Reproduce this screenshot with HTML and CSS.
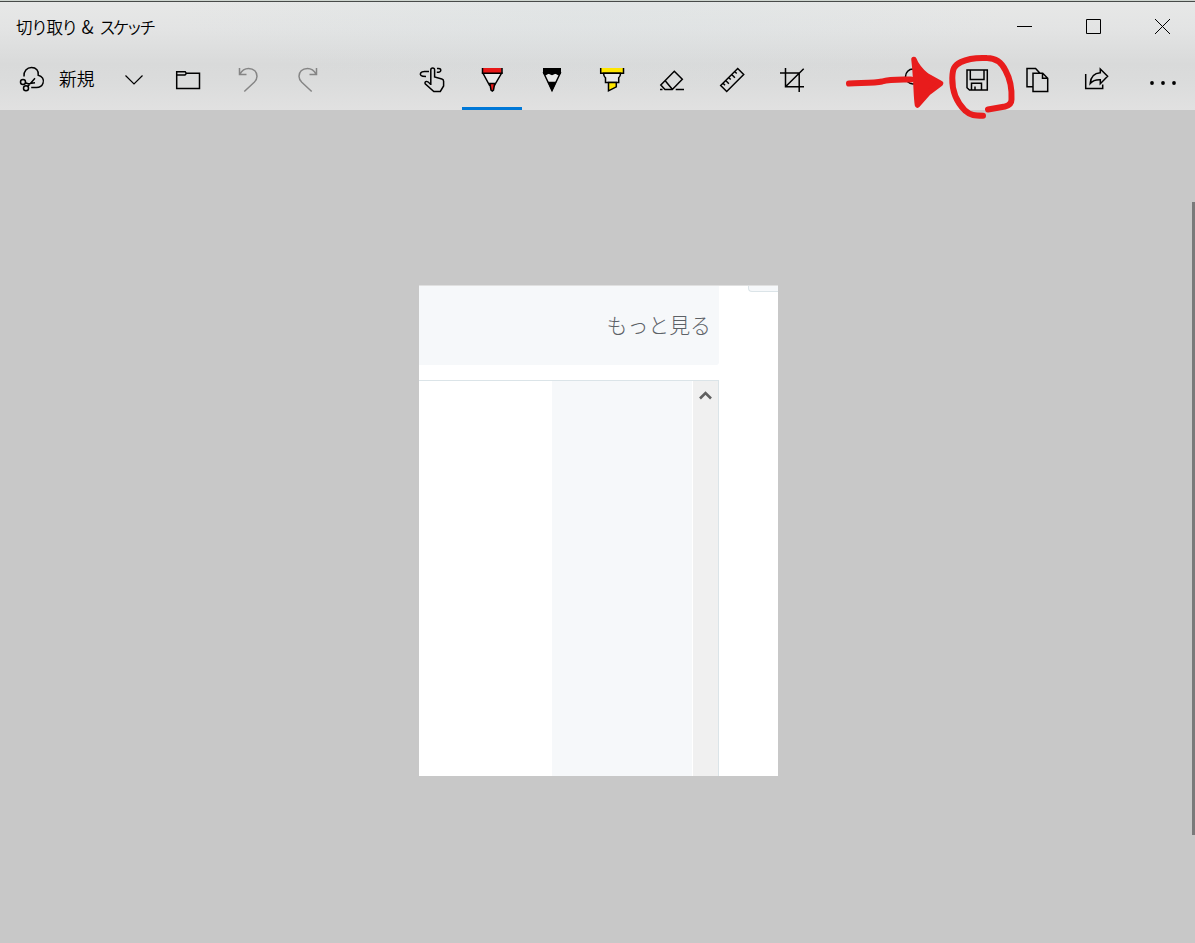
FILE: index.html
```html
<!DOCTYPE html>
<html lang="ja">
<head>
    <meta charset="UTF-8">
    <meta name="viewport" content="width=device-width, initial-scale=1.0">
    <title>切り取り &amp; スケッチ</title>
    <link rel="stylesheet" href="styles.css">
</head>
<body>
    <header class="header">
        <div class="titlebar">
            <h1><span class="kanji">切り取り</span> <span class="amp">&amp;</span> <span class="kana">スケッチ</span></h1>
            <div class="window-buttons">
                <button aria-label="最小化"><svg width="15" height="15"><path d="M0 7.5h15"/></svg></button>
                <button aria-label="最大化"><svg width="15" height="15"><path d="M.5.5h14v14H.5z"/></svg></button>
                <button aria-label="閉じる"><svg width="15" height="15"><path d="M0 0l15 15M15 0L0 15"/></svg></button>
            </div>
        </div>

        <div class="toolbar">
            <div class="group left">
                <button class="new">
                    <svg class="icon" viewBox="0 0 28 28"><path d="M6 10.5C5.5 5 9 1.6 13.5 1.6c4.700 0 7.500 3.200 6.700 7.600 4 1 6.200 4.300 4.800 8-1.100 3-3.500 4.300-6.500 4.300h-5.300M9.500 20.700l7.500-8.400M7.300 16.800l2.700 1 7-1"/><circle cx="5" cy="16" r="2.500"/><circle cx="8" cy="22.300" r="2.500"/></svg>
                    <span>新規</span>
                </button>
                <button class="arrow" aria-label="遅延"><svg class="icon thin" viewBox="0 0 28 28"><path d="M5.500 9.500l8.500 8.500 8.500-8.500"/></svg></button>
                <button class="tool" aria-label="開く"><svg class="icon" viewBox="0 0 28 28"><path d="M2.700 5.700h8.500l1 1.500H25.500v15.300H2.700zM2.700 9h8.300l1.500-1.800"/></svg></button>
                <button class="tool disabled" aria-label="元に戻す"><svg class="icon" viewBox="0 0 28 28"><path d="M5.500 2v6.500h7M5.800 8.300C8 4.300 11 2.500 14.500 2.500c5.500 0 8.500 3.500 8.500 7.800 0 2.700-1 4.200-2.800 6L10.300 25.500"/></svg></button>
                <button class="tool disabled" aria-label="やり直し"><svg class="icon" viewBox="0 0 28 28"><path d="M22.500 2v6.500h-7M22.200 8.300C20 4.300 17 2.500 13.500 2.500 8 2.500 5 6 5 10.300c0 2.700 1 4.200 2.800 6L17.700 25.500"/></svg></button>
            </div>

            <div class="group pens">
                <button class="tool" aria-label="タッチによる手書き"><svg class="icon" viewBox="0 0 28 28"><path d="M12.800 19V4q0-1.900 1.900-1.900T16.600 4v7l7.200 2q1.800.5 1.800 2.300V20l-3.300 5.500h-6.500L7.200 17.800q-.7-2 1-2.400 1.600-.3 4.600 3.100M11 5.500H6.500C2.500 5.700 1.500 8 3 9.500c1 1 2.500 1 5 1M19 2.600q3.800-.6 3.800 1.600T18.800 6.300"/></svg></button>
                <button class="tool active" aria-label="ボールペン"><svg class="icon" viewBox="0 0 28 28"><path class="paper" d="M5 7.300h18.500l-7 12h-5z"/><path class="red" d="M4.700 2h19v5.300h-19z" stroke="none"/><path d="M4.500 2v5.300h19.500V2"/><path class="red" d="M11.800 17.500h4.900l-1.200 6.500-1.200 1-1.300-1z"/></svg></button>
                <button class="tool" aria-label="鉛筆"><svg class="icon" viewBox="0 0 28 28"><path class="paper" d="M5.700 7L14 24.500 22.300 7z"/><path class="black" stroke="none" d="M5 2h18v5.500l-2.500 2-3-1.800-3.500 1.600-3.500-1.600-3 1.800-2.500-2zM9.500 15.700h9L14 25.600z"/></svg></button>
                <button class="tool" aria-label="蛍光ペン"><svg class="icon" viewBox="0 0 28 28"><path class="yellow" stroke="none" d="M2.500 2h23v5.300h-23z"/><path d="M2.700 2v5.300h22.800V2"/><path class="paper" d="M5.500 7.300q.2 3 2 4.500v4.700H20.700v-4.700q1.700-1.500 1.900-4.500z"/><path class="yellow" d="M10.500 16.500h7.800v4.300l-7.800 4z"/></svg></button>
                <button class="tool" aria-label="消しゴム"><svg class="icon" viewBox="0 0 28 28"><path d="M16.300 5.200l8 8.100L14.300 23.500H7l-4.200-4.600zM7 14.600l7.300 8.700M2 23.500h2.500M17.700 23.500H26"/></svg></button>
                <button class="tool" aria-label="ルーラー"><svg class="icon" viewBox="0 0 28 28"><path d="M19.700 2.500l6 6L8.700 25.500l-6-6zM16.700 5.500l2 2M13.700 8.500l3.200 3.200M10.700 11.500l2 2M7.700 14.500l3.200 3.200M5 17.200l2 2"/></svg></button>
                <button class="tool" aria-label="切り取り"><svg class="icon" viewBox="0 0 28 28"><path d="M7.500 2v18.700H26M2 7h19.200v19M7.500 20.700l18.200-18"/></svg></button>
            </div>

            <div class="group right">
                <button class="tool" aria-label="ズーム"><svg class="icon" viewBox="0 0 28 28"><circle cx="10" cy="10.500" r="7.500"/><path d="M15.500 16l9 9"/></svg></button>
                <button class="tool" aria-label="保存"><svg class="icon" viewBox="0 0 28 28"><path d="M4 4h20.300v20H6.500L4 21.700zM7.300 4v9.500H21V4M8.500 24v-6.800h10V24M12 24v-3.500"/></svg></button>
                <button class="tool" aria-label="コピー"><svg class="icon" viewBox="0 0 28 28"><path d="M9.700 20.700H4V2.500h8.600l4.400 4.700M10 7.200h9.700l5 5v13.300H10zM19.500 7.200v5h5"/></svg></button>
                <button class="tool" aria-label="共有"><svg class="icon" viewBox="0 0 28 28"><path d="M2.700 8v14.500h17v-4M17.300 3l7.300 7.300-7.300 7.400v-3.900C13 13.600 10 14.400 7.200 17.500 7.700 11.300 11.500 7.200 17.300 6.800z"/></svg></button>
                <button class="more" aria-label="もっと見る"><svg class="icon" viewBox="0 0 28 28"><g class="black" stroke="none"><circle cx="3" cy="17" r="1.900"/><circle cx="14" cy="17" r="1.900"/><circle cx="25" cy="17" r="1.900"/></g></svg></button>
            </div>
        </div>
    </header>

    <main class="canvas">
        <div class="snip">
            <div class="column">
                <div class="panel-head">もっと見る</div>
                <div class="panel-body">
                    <div class="blank"></div>
                    <div class="shade"></div>
                    <div class="scroll"><svg width="13" height="9" viewBox="0 0 13 9"><path d="M1 7.500l5.500-5.500L12 7.500"/></svg></div>
                </div>
            </div>
            <div class="side"><div class="corner"></div></div>
        </div>
        <div class="scrollbar"></div>
    </main>

    <!-- 赤ペンの書き込み -->
    <svg class="ink" width="190" height="80" viewBox="0 0 190 80">
        <path class="line" d="M14 38.500C30 37.800 40 38 47 36.500 55 34 62 34.500 76 34.500"/>
        <path class="head" d="M79 14.500c1.500 4.500 6.500 12 13 16.500l13.500 7.500-12 9L82.500 60c-1.500-8-1-25-3.500-45.500z"/>
        <path class="ring" d="M153 64.500l17-3c4-1 6.500-3 6.500-7 .5-10-1-20-6-29C166 16 160 13 152 13c-10-.5-19 .5-26 4-7 3.500-8.500 7-8.700 16-.3 13 4.200 24 12.700 32.500 5.500 5 10 5.200 18 5.200"/>
    </svg>
</body>
</html>
```

FILE: styles.css
```css
* {
    box-sizing: border-box;
}

body {
    margin: 0;
    height: 100vh;
    display: flex;
    flex-direction: column;
    position: relative;
    overflow: hidden;
    background-color: #c8c8c8;
    font-family: "Noto Sans CJK JP", sans-serif;
    color: #000;
}

button {
    display: flex;
    align-items: center;
    justify-content: center;
    padding: 0;
    border: none;
    background: none;
    font: inherit;
    color: inherit;
}

svg {
    display: block;
    fill: none;
    stroke: #000;
}

.header {
    height: 110px;
    flex: none;
    border-top: 1px solid #ced5cf;
    background: radial-gradient(ellipse 420px 90px at 590px 5px, rgba(214, 224, 227, 0.3), transparent),
                linear-gradient(#e7e8e7, #e3e4e4 25%, #d9dada 58%, #dbdcdc 75%, #e1e1e1);
}

.titlebar {
    height: 49px;
    display: flex;
    justify-content: space-between;
    border-top: 1px solid #484b49;
}

.titlebar h1 {
    margin: 0 0 0 16px;
    font-size: 16.5px;
    font-weight: 350;
    line-height: 49px;
    white-space: nowrap;
}

.kanji {
    letter-spacing: -1.3px;
}

.amp {
    margin: 0 1px 0 1px;
    font-size: 18px;
}

.kana {
    margin-left: 1px;
    letter-spacing: -3.1px;
}

.window-buttons {
    display: flex;
    margin-right: -2px;
}

.window-buttons button {
    width: 69px;
    height: 49px;
}

.toolbar {
    height: 60px;
    display: flex;
}

.group {
    display: flex;
    flex: none;
}

.left {
    width: 402px;
}

.pens {
    width: 485px;
}

.icon {
    width: 28px;
    height: 28px;
    stroke-width: 1.5;
}

.thin {
    stroke-width: 1.2;
}

.new {
    width: 109px;
    justify-content: flex-start;
    padding-left: 18px;
    font-size: 17.8px;
    font-weight: 350;
}

.new span {
    margin: -4px 0 0 13px;
    line-height: 26px;
}

.arrow {
    width: 49px;
}

.tool {
    width: 60px;
    height: 60px;
    flex: none;
    border-top: 3px solid transparent;
    border-bottom: 3px solid transparent;
}

.active {
    border-bottom-color: #0078d7;
}

.disabled svg {
    stroke: #858585;
}

.more {
    width: 72px;
}

.red {
    fill: #e81818;
}

.yellow {
    fill: #ffe600;
}

.black {
    fill: #000;
}

.paper {
    fill: #e8e9e9;
}

.canvas {
    flex: 1;
    display: flex;
    justify-content: space-between;
    padding: 92px 0 0 419px;
}

.snip {
    width: 359px;
    height: 491px;
    margin-top: 83px;
    display: flex;
    border-top: 1px solid #e0e0e0;
    background-color: #fff;
}

.column {
    width: 300px;
    display: flex;
    flex-direction: column;
    gap: 15px;
}

.panel-head {
    height: 79px;
    padding-right: 8px;
    border-radius: 0 0 3px 0;
    background-color: #f6f8fa;
    color: #5c6166;
    font-size: 20.9px;
    font-weight: 300;
    line-height: 76px;
    text-align: right;
}

.panel-body {
    flex: 1;
    display: flex;
    border-top: 1px solid #dbe4e8;
    border-right: 1px solid #dbe4e8;
}

.blank {
    width: 133px;
}

.shade {
    flex: 1;
    background-color: #f6f8fa;
    border-right: 1px solid #fff;
}

.scroll {
    width: 25px;
    padding: 10px 0 0 6px;
    background-color: #f0f0f0;
}

.scroll svg {
    stroke: #606060;
    stroke-width: 2.6;
}

.side {
    flex: 1;
    display: flex;
    justify-content: flex-end;
}

.corner {
    width: 30px;
    height: 6px;
    border: 1px solid #dbe4e8;
    border-top: none;
    border-right: none;
    border-bottom-left-radius: 4px;
    background-color: #f6f8fa;
}

.scrollbar {
    width: 3px;
    height: 633px;
    background-color: #7a7a7a;
}

/* ツールバーの上に重ねる手書き */
.ink {
    position: absolute;
    left: 835px;
    top: 45px;
    stroke: #e81c1c;
    stroke-width: 6;
    stroke-linecap: round;
    stroke-linejoin: round;
}

.head {
    fill: #e81c1c;
    stroke-width: 5.5;
}
```
